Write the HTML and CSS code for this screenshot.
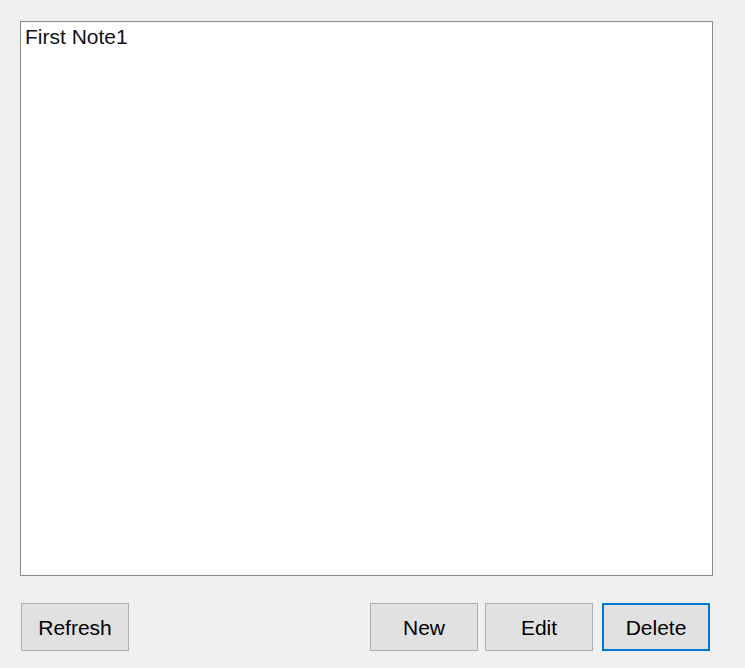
FILE: index.html
```html
<!DOCTYPE html>
<html>
<head>
<meta charset="utf-8">
<link rel="stylesheet" href="styles.css">
</head>
<body>
<div class="window">
  <div class="listbox">
    <div class="item">First Note1</div>
  </div>
  <div class="buttons">
    <button class="btn">Refresh</button>
    <div class="right">
      <button class="btn">New</button>
      <button class="btn btn-edit">Edit</button>
      <button class="btn btn-focus">Delete</button>
    </div>
  </div>
</div>
</body>
</html>
```
FILE: styles.css
```css
html, body {
  margin: 0;
  padding: 0;
  background: #f0f0f0;
  width: 745px;
  height: 668px;
  overflow: hidden;
}
.window {
  padding: 21px 0 0 20px;
  display: flex;
  flex-direction: column;
  font-family: "Liberation Sans", Arial, sans-serif;
  font-size: 21px;
  color: #000;
}
.listbox {
  box-sizing: border-box;
  width: 693px;
  height: 555px;
  background: #fff;
  border: 1px solid #8a8a8a;
  padding: 2px 4px;
}
.item {
  line-height: 26px;
  color: #111;
}
.buttons {
  display: flex;
  justify-content: space-between;
  width: 689px;
  margin-top: 27px;
  margin-left: 1px;
}
.right {
  display: flex;
  gap: 7px;
}
.btn {
  box-sizing: border-box;
  width: 108px;
  height: 48px;
  background: #e1e1e1;
  border: 1px solid #adadad;
  font-family: "Liberation Sans", Arial, sans-serif;
  font-size: 21px;
  color: #000;
  padding: 2px 0 0 0;
  margin: 0;
}
.btn-edit {
  margin-right: 2px;
}
.btn-focus {
  border: 2px solid #0078d7;
}
```
